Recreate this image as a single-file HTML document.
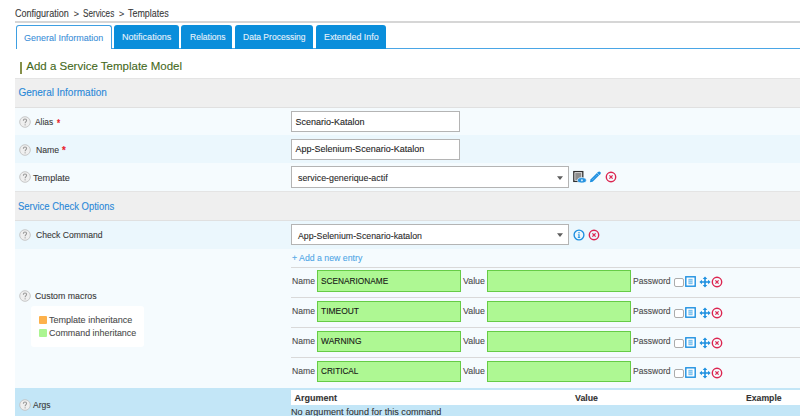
<!DOCTYPE html>
<html><head><meta charset="utf-8">
<style>
*{box-sizing:border-box;margin:0;padding:0}
html,body{width:800px;height:416px;overflow:hidden;background:#fff;font-family:"Liberation Sans",sans-serif;font-size:9px;color:#333}
div,svg{position:absolute}
.t{-webkit-text-stroke:0.1px currentColor;white-space:nowrap;line-height:12px;height:12px;transform-origin:0 0}
.bg{left:15px;width:785px}
.hdr{background:#efefef;border-top:1px solid #e4e4e4;border-bottom:1px solid #e0e0e0}
.lt{background:#f5fbfe}
.bl{background:#ebf7fd}
.tab{top:25px;height:24px;background:#0a8edb;border-radius:3px 3px 0 0}
.inp{background:#fff;border:1px solid #b4b4b4}
.gl{left:291px;width:509px;height:1.5px;background:#d9d9d9}
.grn{background:#aef893;border:1px solid #66cc46}
</style></head><body>
<div class="t" style="left:14.70px;top:8px;font-size:10px;color:#3a3a3a;transform:scaleX(0.903);">Configuration</div>
<div class="t" style="left:73.70px;top:8px;font-size:9px;color:#3a3a3a;">&gt;</div>
<div class="t" style="left:82.90px;top:8px;font-size:10px;color:#3a3a3a;transform:scaleX(0.814);">Services</div>
<div class="t" style="left:119.00px;top:8px;font-size:9px;color:#3a3a3a;">&gt;</div>
<div class="t" style="left:128.40px;top:8px;font-size:10px;color:#3a3a3a;transform:scaleX(0.891);">Templates</div>
<div style="left:15px;top:21px;width:785px;height:1.5px;background:#d6d6d6"></div>
<div style="left:111px;top:48px;width:689px;height:1px;background:#4aa6e6"></div>
<div style="left:16px;top:25px;width:96px;height:24px;background:#fff;border:1px solid #3e9fe2;border-bottom:none;border-radius:3px 3px 0 0"></div>
<div class="tab" style="left:114px;width:65px"></div>
<div class="tab" style="left:181px;width:51px"></div>
<div class="tab" style="left:235px;width:78px"></div>
<div class="tab" style="left:316px;width:70px"></div>
<div class="t" style="left:24.30px;top:32px;font-size:9.9px;color:#3b8fd8;transform:scaleX(0.908);">General Information</div>
<div class="t" style="left:121.90px;top:31px;font-size:9.9px;color:#e6f2fb;transform:scaleX(0.915);">Notifications</div>
<div class="t" style="left:189.50px;top:31px;font-size:9.9px;color:#e6f2fb;transform:scaleX(0.865);">Relations</div>
<div class="t" style="left:243.30px;top:31px;font-size:9.9px;color:#e6f2fb;transform:scaleX(0.863);">Data Processing</div>
<div class="t" style="left:323.80px;top:31px;font-size:9.9px;color:#e6f2fb;transform:scaleX(0.895);">Extended Info</div>
<div style="left:20.3px;top:62px;width:1.4px;height:11.5px;background:#86904a"></div>
<div class="t" style="left:26.25px;top:60px;font-size:11.5px;color:#45691c;">Add a Service Template Model</div>
<div class="bg hdr" style="top:78px;height:30px"></div>
<div class="bg lt" style="top:108px;height:27px"></div>
<div class="bg bl" style="top:135px;height:28px"></div>
<div class="bg lt" style="top:163px;height:28px"></div>
<div class="bg hdr" style="top:191px;height:30px"></div>
<div class="bg bl" style="top:221px;height:28px"></div>
<div class="bg lt" style="top:249px;height:139px"></div>
<div class="bg" style="top:388px;height:28px;background:#c3e6f7"></div>
<div class="t" style="left:18.40px;top:87px;font-size:10px;color:#2a88d8;">General Information</div>
<div class="t" style="left:17.90px;top:201px;font-size:10px;color:#2a88d8;transform:scaleX(0.945);">Service Check Options</div>
<svg style="left:19.0px;top:115.9px" width="12" height="12" viewBox="0 0 12 12"><circle cx="6" cy="6" r="5.3" fill="#efefef" stroke="#c2c2c2" stroke-width="0.9"/><path d="M4.4 4.7C4.4 3.6 5.1 3 6 3C6.9 3 7.6 3.6 7.6 4.5C7.6 5.6 6.1 5.8 6.1 7.3" fill="none" stroke="#999" stroke-width="1.05"/><circle cx="6.1" cy="8.85" r="0.65" fill="#999"/></svg>
<svg style="left:19.0px;top:143.6px" width="12" height="12" viewBox="0 0 12 12"><circle cx="6" cy="6" r="5.3" fill="#efefef" stroke="#c2c2c2" stroke-width="0.9"/><path d="M4.4 4.7C4.4 3.6 5.1 3 6 3C6.9 3 7.6 3.6 7.6 4.5C7.6 5.6 6.1 5.8 6.1 7.3" fill="none" stroke="#999" stroke-width="1.05"/><circle cx="6.1" cy="8.85" r="0.65" fill="#999"/></svg>
<svg style="left:19.0px;top:171.4px" width="12" height="12" viewBox="0 0 12 12"><circle cx="6" cy="6" r="5.3" fill="#efefef" stroke="#c2c2c2" stroke-width="0.9"/><path d="M4.4 4.7C4.4 3.6 5.1 3 6 3C6.9 3 7.6 3.6 7.6 4.5C7.6 5.6 6.1 5.8 6.1 7.3" fill="none" stroke="#999" stroke-width="1.05"/><circle cx="6.1" cy="8.85" r="0.65" fill="#999"/></svg>
<svg style="left:19.0px;top:229.4px" width="12" height="12" viewBox="0 0 12 12"><circle cx="6" cy="6" r="5.3" fill="#efefef" stroke="#c2c2c2" stroke-width="0.9"/><path d="M4.4 4.7C4.4 3.6 5.1 3 6 3C6.9 3 7.6 3.6 7.6 4.5C7.6 5.6 6.1 5.8 6.1 7.3" fill="none" stroke="#999" stroke-width="1.05"/><circle cx="6.1" cy="8.85" r="0.65" fill="#999"/></svg>
<svg style="left:19.0px;top:290.1px" width="12" height="12" viewBox="0 0 12 12"><circle cx="6" cy="6" r="5.3" fill="#efefef" stroke="#c2c2c2" stroke-width="0.9"/><path d="M4.4 4.7C4.4 3.6 5.1 3 6 3C6.9 3 7.6 3.6 7.6 4.5C7.6 5.6 6.1 5.8 6.1 7.3" fill="none" stroke="#999" stroke-width="1.05"/><circle cx="6.1" cy="8.85" r="0.65" fill="#999"/></svg>
<svg style="left:19.0px;top:399.2px" width="12" height="12" viewBox="0 0 12 12"><circle cx="6" cy="6" r="5.3" fill="#efefef" stroke="#c2c2c2" stroke-width="0.9"/><path d="M4.4 4.7C4.4 3.6 5.1 3 6 3C6.9 3 7.6 3.6 7.6 4.5C7.6 5.6 6.1 5.8 6.1 7.3" fill="none" stroke="#999" stroke-width="1.05"/><circle cx="6.1" cy="8.85" r="0.65" fill="#999"/></svg>
<div class="t" style="left:35.20px;top:116px;font-size:9.9px;color:#383838;transform:scaleX(0.848);">Alias</div>
<div class="t" style="left:56.70px;top:118px;font-size:10px;color:#e8202c;font-weight:bold;transform:scaleX(0.797);">*</div>
<div class="t" style="left:35.75px;top:144px;font-size:9.9px;color:#383838;transform:scaleX(0.880);">Name</div>
<div class="t" style="left:61.75px;top:145px;font-size:10px;color:#e8202c;font-weight:bold;transform:scaleX(0.964);">*</div>
<div class="t" style="left:33.20px;top:172px;font-size:9.9px;color:#383838;transform:scaleX(0.921);">Template</div>
<div class="t" style="left:35.60px;top:229px;font-size:9.9px;color:#383838;transform:scaleX(0.872);">Check Command</div>
<div class="t" style="left:35.35px;top:290px;font-size:9.9px;color:#383838;transform:scaleX(0.891);">Custom macros</div>
<div class="t" style="left:33.00px;top:399px;font-size:9.9px;color:#383838;transform:scaleX(0.865);">Args</div>
<div class="inp" style="left:291px;top:111px;width:169px;height:21px"></div>
<div class="inp" style="left:291px;top:139px;width:169px;height:21px"></div>
<div class="inp" style="left:291px;top:166px;width:278px;height:22px"></div>
<div class="inp" style="left:291px;top:224px;width:278px;height:21px"></div>
<div class="t" style="left:295.40px;top:116px;font-size:9px;color:#1e1e1e;">Scenario-Katalon</div>
<div class="t" style="left:295.60px;top:143px;font-size:9px;color:#1e1e1e;">App-Selenium-Scenario-Katalon</div>
<div class="t" style="left:298.20px;top:172px;font-size:9.9px;color:#2a2a2a;transform:scaleX(0.897);">service-generique-actif</div>
<div class="t" style="left:298.20px;top:230px;font-size:9.9px;color:#2a2a2a;transform:scaleX(0.889);">App-Selenium-Scenario-katalon</div>
<svg style="left:557.3px;top:175.5px" width="6" height="4" viewBox="0 0 6 4"><path d="M0 0.2H6L3 3.9Z" fill="#5e5e5e"/></svg>
<svg style="left:557.3px;top:233px" width="6" height="4" viewBox="0 0 6 4"><path d="M0 0.2H6L3 3.9Z" fill="#5e5e5e"/></svg>
<svg style="left:572px;top:170px" width="16" height="14" viewBox="0 0 16 14"><rect x="1.8" y="1.6" width="9" height="9.8" fill="#fff" stroke="#303030" stroke-width="1.3"/><rect x="3.2" y="3" width="6.2" height="7" fill="#8d8d8d"/><ellipse cx="9.9" cy="10.3" rx="4.4" ry="2.7" fill="#2592e0" stroke="#f5fbfe" stroke-width="0.7"/><circle cx="9.9" cy="10.3" r="1.1" fill="#cfe8f9"/></svg>
<svg style="left:588px;top:170px" width="14" height="14" viewBox="0 0 14 14"><g transform="translate(1.9 12.3) scale(0.9) translate(-1.8 -12.4)"><path d="M1.8 12.4L4.84 11.76L13.4 3.2L11 0.8L2.44 9.36Z" fill="#1c8fe0"/><circle cx="12.2" cy="2" r="1.7" fill="#1c8fe0"/><path d="M9.6 1.9L12.4 4.7" stroke="#f5fbfe" stroke-width="0.55"/><path d="M4.3 9.9L10.2 4" stroke="#cfe8fb" stroke-width="0.6" stroke-dasharray="1.2 0.9"/></g></svg>
<svg style="left:605.2px;top:171.0px" width="12" height="12" viewBox="0 0 12 12"><circle cx="6" cy="6" r="4.7" fill="none" stroke="#dc2550" stroke-width="1.4"/><path d="M4.4 4.4L7.6 7.6M7.6 4.4L4.4 7.6" stroke="#dc2550" stroke-width="1.25"/></svg>
<svg style="left:572.5px;top:228.75px" width="12" height="12" viewBox="0 0 12 12"><circle cx="6" cy="6" r="4.9" fill="none" stroke="#1c8fe0" stroke-width="1.35"/><path d="M4.9 5.2H6.6V8.3H7.2V8.9H4.8V8.3H5.4V5.8H4.9Z" fill="#1c8fe0"/><circle cx="6" cy="3.8" r="0.75" fill="#1c8fe0"/></svg>
<svg style="left:588.3px;top:228.8px" width="12" height="12" viewBox="0 0 12 12"><circle cx="6" cy="6" r="4.7" fill="none" stroke="#dc2550" stroke-width="1.4"/><path d="M4.4 4.4L7.6 7.6M7.6 4.4L4.4 7.6" stroke="#dc2550" stroke-width="1.25"/></svg>
<div style="left:31px;top:306px;width:113px;height:41px;background:#fff;border-radius:3px"></div>
<div style="left:39px;top:316px;width:7.5px;height:7.5px;background:#fdb14b;border-radius:1px"></div>
<div style="left:39px;top:329px;width:7.5px;height:7.5px;background:#abf591;border-radius:1px"></div>
<div class="t" style="left:49.00px;top:314px;font-size:9.9px;color:#4a4a4a;transform:scaleX(0.914);">Template inheritance</div>
<div class="t" style="left:49.00px;top:327px;font-size:9.9px;color:#4a4a4a;transform:scaleX(0.903);">Command inheritance</div>
<div class="t" style="left:292.00px;top:252px;font-size:9.9px;color:#4fa6e6;transform:scaleX(0.886);">+ Add a new entry</div>
<div class="gl" style="top:266.6px"></div>
<div class="gl" style="top:296.7px"></div>
<div class="gl" style="top:326.8px"></div>
<div class="gl" style="top:356.9px"></div>
<div class="grn" style="left:317px;top:270.30px;width:144px;height:21.4px"></div>
<div class="grn" style="left:487px;top:270.30px;width:144px;height:21.4px"></div>
<div class="t" style="left:291.50px;top:275px;font-size:9.9px;color:#4a4a4a;transform:scaleX(0.871);">Name</div>
<div class="t" style="left:321.00px;top:275px;font-size:9px;color:#151515;transform:scaleX(0.920);">SCENARIONAME</div>
<div class="t" style="left:462.70px;top:275px;font-size:9.9px;color:#4a4a4a;transform:scaleX(0.895);">Value</div>
<div class="t" style="left:633.30px;top:275px;font-size:9.9px;color:#4a4a4a;transform:scaleX(0.867);">Password</div>
<div style="left:674px;top:278px;width:10px;height:9px;border:1px solid #acacac;border-radius:2px;background:#fff"></div>
<svg style="left:685px;top:276px" width="11" height="11" viewBox="0 0 11 11"><rect x="0.8" y="0.8" width="9.4" height="9.4" fill="#fff" stroke="#1c8fe0" stroke-width="1.4"/><rect x="3.4" y="2.8" width="4.2" height="5.4" fill="#7cc2ef"/><path d="M3.4 4.6H7.6M3.4 6.4H7.6" stroke="#d6ecfb" stroke-width="0.5"/></svg>
<svg style="left:698.5px;top:276px" width="12" height="12" viewBox="0 0 12 12"><path d="M6 0.4L8.3 2.9H6.8V5.2H9.1V3.7L11.6 6L9.1 8.3V6.8H6.8V9.1H8.3L6 11.6L3.7 9.1H5.2V6.8H2.9V8.3L0.4 6L2.9 3.7V5.2H5.2V2.9H3.7Z" fill="#1c8fe0"/></svg>
<svg style="left:710.9px;top:276.0px" width="12" height="12" viewBox="0 0 12 12"><circle cx="6" cy="6" r="4.7" fill="none" stroke="#dc2550" stroke-width="1.4"/><path d="M4.4 4.4L7.6 7.6M7.6 4.4L4.4 7.6" stroke="#dc2550" stroke-width="1.25"/></svg>
<div class="grn" style="left:317px;top:300.53px;width:144px;height:21.4px"></div>
<div class="grn" style="left:487px;top:300.53px;width:144px;height:21.4px"></div>
<div class="t" style="left:291.50px;top:305px;font-size:9.9px;color:#4a4a4a;transform:scaleX(0.871);">Name</div>
<div class="t" style="left:321.00px;top:305px;font-size:9px;color:#151515;transform:scaleX(0.938);">TIMEOUT</div>
<div class="t" style="left:462.70px;top:305px;font-size:9.9px;color:#4a4a4a;transform:scaleX(0.895);">Value</div>
<div class="t" style="left:633.30px;top:305px;font-size:9.9px;color:#4a4a4a;transform:scaleX(0.867);">Password</div>
<div style="left:674px;top:309px;width:10px;height:9px;border:1px solid #acacac;border-radius:2px;background:#fff"></div>
<svg style="left:685px;top:307px" width="11" height="11" viewBox="0 0 11 11"><rect x="0.8" y="0.8" width="9.4" height="9.4" fill="#fff" stroke="#1c8fe0" stroke-width="1.4"/><rect x="3.4" y="2.8" width="4.2" height="5.4" fill="#7cc2ef"/><path d="M3.4 4.6H7.6M3.4 6.4H7.6" stroke="#d6ecfb" stroke-width="0.5"/></svg>
<svg style="left:698.5px;top:307px" width="12" height="12" viewBox="0 0 12 12"><path d="M6 0.4L8.3 2.9H6.8V5.2H9.1V3.7L11.6 6L9.1 8.3V6.8H6.8V9.1H8.3L6 11.6L3.7 9.1H5.2V6.8H2.9V8.3L0.4 6L2.9 3.7V5.2H5.2V2.9H3.7Z" fill="#1c8fe0"/></svg>
<svg style="left:710.9px;top:307.0px" width="12" height="12" viewBox="0 0 12 12"><circle cx="6" cy="6" r="4.7" fill="none" stroke="#dc2550" stroke-width="1.4"/><path d="M4.4 4.4L7.6 7.6M7.6 4.4L4.4 7.6" stroke="#dc2550" stroke-width="1.25"/></svg>
<div class="grn" style="left:317px;top:330.76px;width:144px;height:21.4px"></div>
<div class="grn" style="left:487px;top:330.76px;width:144px;height:21.4px"></div>
<div class="t" style="left:291.50px;top:335px;font-size:9.9px;color:#4a4a4a;transform:scaleX(0.871);">Name</div>
<div class="t" style="left:321.00px;top:335px;font-size:9px;color:#151515;transform:scaleX(0.938);">WARNING</div>
<div class="t" style="left:462.70px;top:335px;font-size:9.9px;color:#4a4a4a;transform:scaleX(0.895);">Value</div>
<div class="t" style="left:633.30px;top:335px;font-size:9.9px;color:#4a4a4a;transform:scaleX(0.867);">Password</div>
<div style="left:674px;top:339px;width:10px;height:9px;border:1px solid #acacac;border-radius:2px;background:#fff"></div>
<svg style="left:685px;top:337px" width="11" height="11" viewBox="0 0 11 11"><rect x="0.8" y="0.8" width="9.4" height="9.4" fill="#fff" stroke="#1c8fe0" stroke-width="1.4"/><rect x="3.4" y="2.8" width="4.2" height="5.4" fill="#7cc2ef"/><path d="M3.4 4.6H7.6M3.4 6.4H7.6" stroke="#d6ecfb" stroke-width="0.5"/></svg>
<svg style="left:698.5px;top:337px" width="12" height="12" viewBox="0 0 12 12"><path d="M6 0.4L8.3 2.9H6.8V5.2H9.1V3.7L11.6 6L9.1 8.3V6.8H6.8V9.1H8.3L6 11.6L3.7 9.1H5.2V6.8H2.9V8.3L0.4 6L2.9 3.7V5.2H5.2V2.9H3.7Z" fill="#1c8fe0"/></svg>
<svg style="left:710.9px;top:337.0px" width="12" height="12" viewBox="0 0 12 12"><circle cx="6" cy="6" r="4.7" fill="none" stroke="#dc2550" stroke-width="1.4"/><path d="M4.4 4.4L7.6 7.6M7.6 4.4L4.4 7.6" stroke="#dc2550" stroke-width="1.25"/></svg>
<div class="grn" style="left:317px;top:360.99px;width:144px;height:21.4px"></div>
<div class="grn" style="left:487px;top:360.99px;width:144px;height:21.4px"></div>
<div class="t" style="left:291.50px;top:365px;font-size:9.9px;color:#4a4a4a;transform:scaleX(0.871);">Name</div>
<div class="t" style="left:321.00px;top:365px;font-size:9px;color:#151515;transform:scaleX(0.912);">CRITICAL</div>
<div class="t" style="left:462.70px;top:365px;font-size:9.9px;color:#4a4a4a;transform:scaleX(0.895);">Value</div>
<div class="t" style="left:633.30px;top:365px;font-size:9.9px;color:#4a4a4a;transform:scaleX(0.867);">Password</div>
<div style="left:674px;top:369px;width:10px;height:9px;border:1px solid #acacac;border-radius:2px;background:#fff"></div>
<svg style="left:685px;top:367px" width="11" height="11" viewBox="0 0 11 11"><rect x="0.8" y="0.8" width="9.4" height="9.4" fill="#fff" stroke="#1c8fe0" stroke-width="1.4"/><rect x="3.4" y="2.8" width="4.2" height="5.4" fill="#7cc2ef"/><path d="M3.4 4.6H7.6M3.4 6.4H7.6" stroke="#d6ecfb" stroke-width="0.5"/></svg>
<svg style="left:698.5px;top:367px" width="12" height="12" viewBox="0 0 12 12"><path d="M6 0.4L8.3 2.9H6.8V5.2H9.1V3.7L11.6 6L9.1 8.3V6.8H6.8V9.1H8.3L6 11.6L3.7 9.1H5.2V6.8H2.9V8.3L0.4 6L2.9 3.7V5.2H5.2V2.9H3.7Z" fill="#1c8fe0"/></svg>
<svg style="left:710.9px;top:367.0px" width="12" height="12" viewBox="0 0 12 12"><circle cx="6" cy="6" r="4.7" fill="none" stroke="#dc2550" stroke-width="1.4"/><path d="M4.4 4.4L7.6 7.6M7.6 4.4L4.4 7.6" stroke="#dc2550" stroke-width="1.25"/></svg>
<div style="left:291px;top:390px;width:509px;height:15px;background:#fff"></div>
<div class="t" style="left:294.50px;top:392px;font-size:9px;color:#333;font-weight:bold;">Argument</div>
<div class="t" style="left:575.00px;top:392px;font-size:9px;color:#333;font-weight:bold;transform:scaleX(0.978);">Value</div>
<div class="t" style="left:746.40px;top:392px;font-size:9px;color:#333;font-weight:bold;transform:scaleX(0.962);">Example</div>
<div class="t" style="left:291.25px;top:406px;font-size:9.9px;color:#333;transform:scaleX(0.922);">No argument found for this command</div>
</body></html>
